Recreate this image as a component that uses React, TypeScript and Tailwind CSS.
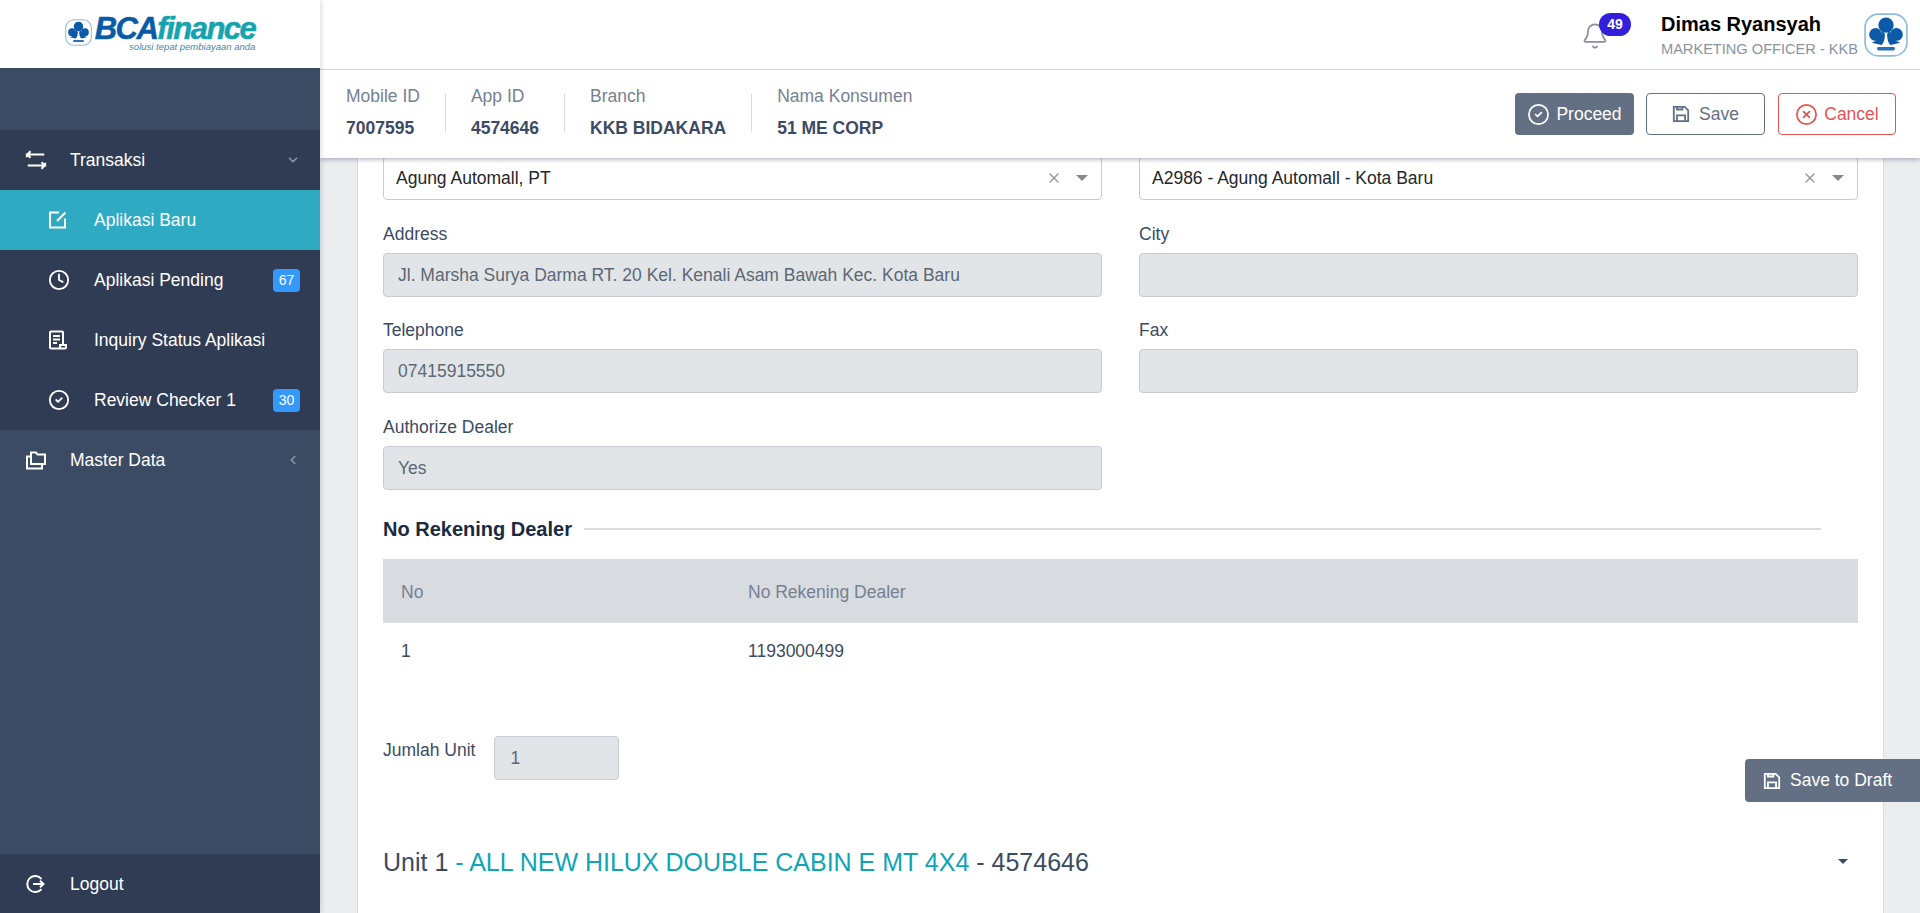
import { Bell, ChevronDown, ChevronLeft, CircleCheck, CircleX, Clock, X } from "lucide-react";
import type { ReactNode } from "react";

function BcaMark({ className }: { className: string }) {
  return (
    <svg viewBox="0 0 40 40" className={className}>
      <rect x="1" y="1" width="38" height="38" rx="12" fill="#fff" stroke="#8dbbe0" strokeWidth="1.500" />
      <circle cx="20" cy="11" r="7" fill="#0b5aa8" />
      <circle cx="10.500" cy="19.500" r="5.800" fill="#0b5aa8" />
      <circle cx="29.500" cy="19.500" r="5.800" fill="#0b5aa8" />
      <path d="M16 15 C17 20 13 25 7 27 L16 29 C18 27 19 24 19 19Z" fill="#0b5aa8" />
      <path d="M24 15 C23 20 27 25 33 27 L24 29 C22 27 21 24 21 19Z" fill="#0b5aa8" />
      <rect x="12" y="31" width="16" height="3" rx="1" fill="#2a70b5" />
    </svg>
  );
}

function IconLoop() {
  return (
    <svg viewBox="0 0 24 24" className="h-[22px] w-[22px]" fill="none" stroke="currentColor" strokeWidth="2.200">
      <path d="M2 9V6h19M6 2.500 2.500 6 6 9.500M22 15v3H3M18 14.500l3.500 3.500-3.500 3.500" />
    </svg>
  );
}

function IconNote() {
  return (
    <svg viewBox="0 0 20 20" className="h-5 w-5" fill="none" stroke="currentColor" strokeWidth="2">
      <path d="M11 2.500H2v15h15V8.500M9 11l8.500-8.500" />
    </svg>
  );
}

function IconDoc() {
  return (
    <svg viewBox="0 0 20 20" className="h-5 w-5" fill="none" stroke="currentColor" strokeWidth="2">
      <path d="M15 15V2.500a1 1 0 0 0-1-1H3a1 1 0 0 0-1 1V17a1.500 1.500 0 0 0 1.500 1.500H17a1 1 0 0 0 1-1V15h-6v3.500M5 6h7M5 9.500h7M5 13h4" />
    </svg>
  );
}

function IconFolders() {
  return (
    <svg viewBox="0 0 22 22" className="h-[22px] w-[22px]" fill="none" stroke="currentColor" strokeWidth="2">
      <path d="M6 14.500V3.500h5l1.500 2H20V15H6zM6 7.500H2V19.500h15V15" />
    </svg>
  );
}

function IconLogout() {
  return (
    <svg viewBox="0 0 20 20" className="h-5 w-5" fill="none" stroke="currentColor" strokeWidth="2">
      <path d="M16.500 5A8 8 0 1 0 16.500 15M8 10h10.500M15 6.800 18.500 10 15 13.200" />
    </svg>
  );
}

function IconSave({ className }: { className: string }) {
  return (
    <svg viewBox="0 0 20 20" className={className} fill="none" stroke="currentColor" strokeWidth="2">
      <path d="M2 2h12l4 4v12H2zM5.500 18v-6.500h9V18M5.500 2v3h6V2" />
    </svg>
  );
}

function Badge({ value }: { value: string }) {
  return (
    <span className="flex h-[23px] w-[27px] items-center justify-center rounded-[4px] bg-[#3399ff] text-[14px] text-white">
      {value}
    </span>
  );
}

function SubItem({ icon, label, badge, active }: { icon: ReactNode; label: string; badge?: string; active?: boolean }) {
  return (
    <div className={`flex h-[60px] items-center pl-[48px] pr-[20px] text-white ${active ? "bg-[#2eaac3]" : ""}`}>
      <span className="flex w-[46px]">{icon}</span>
      <span className="flex-1 text-[17.500px]">{label}</span>
      {badge ? <Badge value={badge} /> : null}
    </div>
  );
}

function Sidebar() {
  return (
    <aside className="z-30 flex h-full w-[320px] shrink-0 flex-col bg-[#3c4b64] shadow-[2px_0_4px_rgba(60,75,100,0.15)]">
      <div className="flex h-[68px] items-center justify-center bg-white">
        <BcaMark className="mb-[3px] mr-[3px] h-[27px] w-[27px]" />
        <div className="flex flex-col items-end">
          <div className="flex h-[26px] items-baseline text-[31px] leading-[26px] tracking-[-1.500px] [-webkit-text-stroke:0.5px_currentColor]">
            <span className="font-bold italic text-[#0b5aa8]">BCA</span>
            <span className="font-bold italic text-[#16a3b0]">finance</span>
          </div>
          <span className="text-[9.500px] leading-[10px] italic text-[#4a86a8]">solusi tepat pembiayaan anda</span>
        </div>
      </div>
      <div className="h-[62px]" />
      <div className="bg-[#303c54]">
        <div className="flex h-[60px] items-center pl-[25px] pr-[20px] text-white">
          <span className="flex w-[45px]"><IconLoop /></span>
          <span className="flex-1 text-[17.500px]">Transaksi</span>
          <ChevronDown size={14} strokeWidth={3} className="text-[#8a93a2]" />
        </div>
        <SubItem active icon={<IconNote />} label="Aplikasi Baru" />
        <SubItem icon={<Clock size={22} strokeWidth={2} />} label="Aplikasi Pending" badge="67" />
        <SubItem icon={<IconDoc />} label="Inquiry Status Aplikasi" />
        <SubItem icon={<CircleCheck size={22} strokeWidth={2} />} label="Review Checker 1" badge="30" />
      </div>
      <div className="flex h-[60px] items-center pl-[25px] pr-[20px] text-white">
        <span className="flex w-[45px]"><IconFolders /></span>
        <span className="flex-1 text-[17.500px]">Master Data</span>
        <ChevronLeft size={14} strokeWidth={3} className="text-[#8a93a2]" />
      </div>
      <div className="mt-auto flex h-[59px] items-center bg-[#303c54] pl-[25px] pt-[1px] text-white">
        <span className="flex w-[45px]"><IconLogout /></span>
        <span className="text-[17.500px]">Logout</span>
      </div>
    </aside>
  );
}

function TopBar() {
  return (
    <header className="flex h-[70px] shrink-0 items-center justify-end border-b border-[#d8dbe0] bg-white pr-[12px]">
      <div className="relative mr-[40px] mt-[3px] text-[#8a8f99]">
        <Bell size={28} strokeWidth={1.500} />
        <span className="absolute -right-[22px] -top-[9px] flex h-[23px] w-[32px] items-center justify-center rounded-full bg-[#321fdb] text-[14px] font-bold text-white">
          49
        </span>
      </div>
      <div className="ml-[12px] mr-[6px]">
        <div className="text-[20px] font-bold leading-[24px] text-black">Dimas Ryansyah</div>
        <div className="mt-[4px] text-[14.600px] leading-[18px] text-[#8a93a2]">MARKETING OFFICER - KKB</div>
      </div>
      <BcaMark className="h-[44px] w-[44px]" />
    </header>
  );
}

function Info({ label, value, last }: { label: string; value: string; last?: boolean }) {
  return (
    <div className="flex">
      <div>
        <div className="text-[17.500px] leading-[22px] text-[#768192]">{label}</div>
        <div className="mt-[10px] text-[17.500px] font-bold leading-[22px] text-[#3c4b64]">{value}</div>
      </div>
      {last ? null : <div className="mx-[25px] mt-[9px] h-[38px] w-px bg-[#d8dbe0]" />}
    </div>
  );
}

function SubBar() {
  return (
    <div className="relative z-20 flex h-[88px] shrink-0 items-center justify-between bg-white pl-[26px] pr-[24px] shadow-[0_2px_4px_rgba(60,75,100,0.35)]">
      <div className="mb-[4px] flex">
        <Info label="Mobile ID" value="7007595" />
        <Info label="App ID" value="4574646" />
        <Info label="Branch" value="KKB BIDAKARA" />
        <Info label="Nama Konsumen" value="51 ME CORP" last />
      </div>
      <div className="flex text-[17.500px]">
        <button className="flex h-[42px] w-[119px] items-center justify-center gap-[6px] rounded-[4px] bg-[#636f83] text-white">
          <CircleCheck size={23} strokeWidth={1.800} />
          Proceed
        </button>
        <button className="ml-[12px] flex h-[42px] w-[119px] items-center justify-center gap-[9px] rounded-[4px] border border-[#636f83] bg-white text-[#636f83]">
          <IconSave className="h-[18px] w-[18px]" />
          Save
        </button>
        <button className="ml-[13px] flex h-[42px] w-[118px] items-center justify-center gap-[6px] rounded-[4px] border border-[#e55353] bg-white text-[#e55353]">
          <CircleX size={23} strokeWidth={1.800} />
          Cancel
        </button>
      </div>
    </div>
  );
}

function SelectBox({ value }: { value: string }) {
  return (
    <div className="flex h-[44px] items-center rounded-[4px] border border-[#c8ccd2] bg-white pl-[12px] pr-[13px] text-[17.500px] text-[#23282c]">
      <span className="flex-1">{value}</span>
      <X size={16} strokeWidth={2} className="mr-[14px] text-[#999]" />
      <span className="h-0 w-0 border-x-[6px] border-t-[6px] border-x-transparent border-t-[#888]" />
    </div>
  );
}

function Field({ label, value }: { label: string; value?: string }) {
  return (
    <div>
      <div className="mb-[8px] text-[17.500px] leading-[22px] text-[#3c4b64]">{label}</div>
      <div className="flex h-[44px] items-center rounded-[4px] border border-[#c8ccd2] bg-[#e2e5e8] px-[14px] pt-[1px] text-[17.500px] text-[#5c6873]">
        {value}
      </div>
    </div>
  );
}

export default function App() {
  return (
    <div className="relative flex h-[913px] w-full overflow-hidden bg-[#ebedef] font-['Liberation_Sans',Arial,sans-serif]">
      <Sidebar />
      <div className="flex min-w-0 flex-1 flex-col">
        <TopBar />
        <SubBar />
        <main className="min-h-0 flex-1 overflow-hidden pl-[37px] pr-[36px]">
          <div className="-mt-[2px] h-[800px] border-x border-[#d8dbe0] bg-white pl-[25px] pr-[25px]">
            <div className="grid grid-cols-2 gap-x-[37px] gap-y-[22.500px]">
              <SelectBox value="Agung Automall, PT" />
              <SelectBox value="A2986 - Agung Automall - Kota Baru" />
              <Field label="Address" value="Jl. Marsha Surya Darma RT. 20 Kel. Kenali Asam Bawah Kec. Kota Baru" />
              <Field label="City" />
              <Field label="Telephone" value="07415915550" />
              <Field label="Fax" />
              <Field label="Authorize Dealer" value="Yes" />
            </div>

            <div className="mt-[25px] flex items-center pr-[37px]">
              <h3 className="text-[20px] font-bold leading-[28px] text-[#1a2a3f]">No Rekening Dealer</h3>
              <div className="ml-[12px] h-[2px] flex-1 bg-[#d8dbe0]" />
            </div>

            <table className="mt-[16px] w-full text-left text-[17.500px]">
              <thead>
                <tr className="h-[64px] bg-[#d8dbe0] text-[#768192]">
                  <th className="w-[365px] pl-[18px] pt-[3px] font-normal">No</th>
                  <th className="pt-[3px] font-normal">No Rekening Dealer</th>
                </tr>
              </thead>
              <tbody>
                <tr className="h-[58px] text-[#3c4b64]">
                  <td className="pl-[18px]">1</td>
                  <td>1193000499</td>
                </tr>
              </tbody>
            </table>

            <div className="mt-[55px] flex items-start">
              <span className="mt-[3px] text-[17.500px] leading-[22px] text-[#3c4b64]">Jumlah Unit</span>
              <div className="ml-[19px] flex h-[44px] w-[125px] items-center rounded-[4px] border border-[#c8ccd2] bg-[#e2e5e8] px-[15px] pt-[1px] text-[17.500px] text-[#5c6873]">
                1
              </div>
            </div>

            <div className="mt-[64px] flex items-center justify-between pr-[10px] text-[25px] leading-[36px] text-[#3c4b64]">
              <div>
                Unit 1 <span className="text-[#0ea5b7]">- ALL NEW HILUX DOUBLE CABIN E MT 4X4</span> - 4574646
              </div>
              <span className="h-0 w-0 border-x-[5px] border-t-[5px] border-x-transparent border-t-[#3c4b64]" />
            </div>
          </div>
        </main>
      </div>
      <button className="absolute right-0 top-[759px] z-10 flex h-[43px] w-[175px] items-center gap-[9px] rounded-l-[4px] bg-[#636f83] pl-[18px] text-[17.500px] text-white">
        <IconSave className="h-[18px] w-[18px]" />
        Save to Draft
      </button>
    </div>
  );
}
